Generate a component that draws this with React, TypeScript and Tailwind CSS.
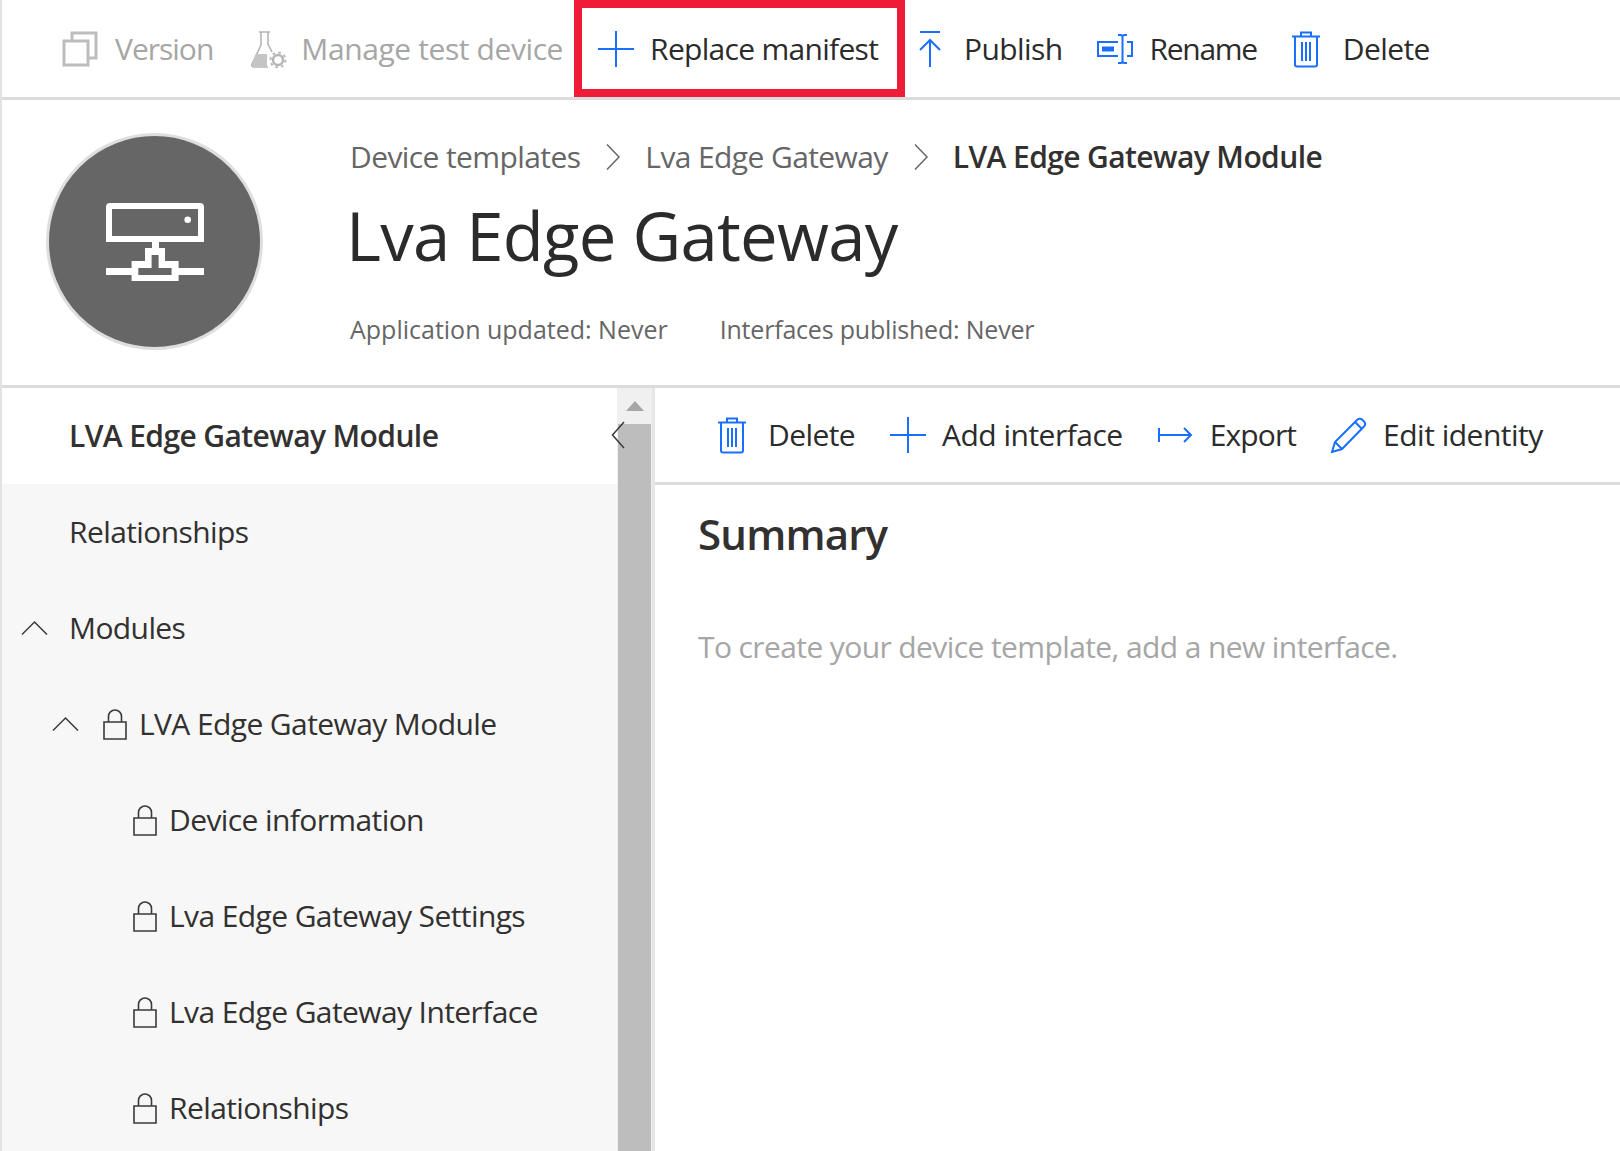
import type { ReactNode } from 'react';

const BLUE = '#1a6fff';

function Trash() {
  return (
    <svg width="30" height="38" viewBox="0 0 30 38" fill="none" stroke={BLUE} strokeWidth="2">
      <path d="M1 6.500h28M10 6V2.500h10V6M4 7v27.500a2 2 0 0 0 2 2h18a2 2 0 0 0 2-2V7" />
      <path d="M11 12v19M15 12v19M19 12v19" />
    </svg>
  );
}

function Plus() {
  return (
    <svg width="36" height="36" viewBox="0 0 36 36" fill="none" stroke={BLUE} strokeWidth="2">
      <path d="M0 18h36M18 0v36" />
    </svg>
  );
}

function Lock() {
  return (
    <svg width="24" height="31" viewBox="0 0 24 31" fill="none" stroke="#3a3a3a" strokeWidth="1.6">
      <path d="M1 13h22v17H1zM5.500 13V7.500a6.500 6.500 0 0 1 13 0V13" />
    </svg>
  );
}

function ChevronUp() {
  return (
    <svg width="27" height="16" viewBox="0 0 27 16" fill="none" stroke="#3a3a3a" strokeWidth="1.5">
      <path d="M1 14.500 13.500 2 26 14.500" />
    </svg>
  );
}

function Crumb() {
  return (
    <svg width="16" height="28" viewBox="0 0 16 28" fill="none" stroke="#666" strokeWidth="1.5">
      <path d="M2 1.500 14 14 2 26.500" />
    </svg>
  );
}

function ToolItem({ icon, label, gap, muted, track }: { icon: ReactNode; label: string; gap: string; muted?: boolean; track?: string }) {
  return (
    <div className={`flex items-center ${gap}`}>
      {icon}
      <span className={`${muted ? 'text-[#a6a6a6]' : 'text-[#2b2b2b]'} ${track ?? ''}`}>{label}</span>
    </div>
  );
}

function NavRow({ label, indent, chevron, lock, chevronGap }: { label: string; indent: string; chevron?: boolean; lock?: boolean; chevronGap?: string }) {
  return (
    <div className={`h-24 flex items-center text-[#323130] ${indent}`}>
      {chevron && <span className={`flex ${chevronGap ?? 'mr-[21px]'}`}><ChevronUp /></span>}
      {lock && <span className="mr-[12px] flex"><Lock /></span>}
      <span>{label}</span>
    </div>
  );
}

export default function App() {
  return (
    <div
      className="w-[1620px] h-[1151px] overflow-hidden bg-white border-l-2 border-[#e3e3e3] text-[30px] leading-none tracking-[-0.6px]"
      style={{ fontFamily: '"Open Sans", "Noto Sans", sans-serif' }}
    >
      {/* top command bar */}
      <div className="h-[100px] border-b-[3px] border-[#dcdcdc] flex items-center pl-[60px]">
        <div className="flex items-center gap-[38px]">
          <ToolItem
            muted
            gap="gap-[17px]"
            label="Version"
            track="tracking-[-1px]"
            icon={
              <svg width="36" height="36" viewBox="0 0 36 36" fill="none" stroke="#bdbdbd" strokeWidth="3">
                <path d="M2 10h24v24H2zM10 9V2h24v25h-7" />
              </svg>
            }
          />
          <ToolItem
            muted
            gap="gap-[14px]"
            label="Manage test device"
            track="tracking-[-0.4px]"
            icon={
              <svg width="36" height="38" viewBox="0 0 36 38" fill="none" stroke="#b5b5b5" strokeWidth="1.6">
                <path d="M8 2h11M10 2v13L1 34a2 2 0 0 0 2 3h14M17 2v12l4 8" />
                <path d="M5 24h11v13H3a2 2 0 0 1-2-3z" fill="#c4c4c4" stroke="none" />
                <circle cx="27" cy="30" r="5" strokeWidth="2.5" />
                <circle cx="27" cy="30" r="7.500" strokeWidth="2" strokeDasharray="2.5 3.4" />
              </svg>
            }
          />
        </div>
        <div className="ml-[11px] mr-[13px] h-[97px] self-start w-[331px] border-[8px] border-[#ee1c36] flex items-center pl-[16px]">
          <ToolItem gap="gap-[16px]" label="Replace manifest" track="tracking-[-0.7px]" icon={<Plus />} />
        </div>
        <div className="flex items-center gap-[34px]">
          <ToolItem
            gap="gap-[22px]"
            label="Publish"
            icon={
              <svg width="24" height="36" viewBox="0 0 24 36" fill="none" stroke={BLUE} strokeWidth="2">
                <path d="M2 1h20M12 36V9M2 19 12 9l10 10" />
              </svg>
            }
          />
          <ToolItem
            gap="gap-[17px]"
            label="Rename"
            track="tracking-[-1.3px]"
            icon={
              <svg width="36" height="30" viewBox="0 0 36 30" fill="none" stroke={BLUE} strokeWidth="2">
                <path d="M21 8H1v14h20M30 8h5v14h-5M21 1h2.500a2 2 0 0 1 2 2v24a2 2 0 0 1-2 2H21M30 1h-2.500a2 2 0 0 0-2 2v24a2 2 0 0 0 2 2H30" />
                <path d="M5 12.500h12v5H5z" fill={BLUE} stroke="none" />
              </svg>
            }
          />
          <ToolItem gap="gap-[22px]" label="Delete" icon={<Trash />} />
        </div>
      </div>

      {/* template header */}
      <div className="h-[288px] border-b-[3px] border-[#dcdcdc] flex">
        <div className="ml-[44px] mt-[33px] size-[217px] rounded-full bg-[#666666] border-[3px] border-[#dedede] flex items-center justify-center">
          <svg width="98" height="78" viewBox="0 0 98 78" fill="none">
            <path d="M4 3h90a1 1 0 0 1 1 1v32H3V4a1 1 0 0 1 1-1z" stroke="#fff" strokeWidth="6" />
            <circle cx="81.700" cy="16.700" r="3.300" fill="#fff" />
            <path
              fill="#fff"
              fillRule="evenodd"
              d="M46 39h7v6h6v13h13.600v7H98v7H72.600v6H25.600v-6H0v-7h25.600v-7H39V45h7zM45.600 52v13H32.300v7h33.300v-7h-13V52z"
            />
          </svg>
        </div>
        <div className="ml-[87px] mt-[42px]">
          <div className="flex items-center text-[#666666]">
            <span>Device templates</span>
            <span className="ml-[25px] mr-[24px] flex"><Crumb /></span>
            <span>Lva Edge Gateway</span>
            <span className="ml-[25px] mr-[24px] flex"><Crumb /></span>
            <span className="font-semibold text-[#323130]">LVA Edge Gateway Module</span>
          </div>
          <div className="mt-[30px] text-[67px] text-[#2b2b2b] tracking-[-0.7px] -ml-[4px]">Lva Edge Gateway</div>
          <div className="mt-[48px] flex gap-[52px] text-[25px] tracking-normal text-[#666666]">
            <span>Application updated: Never</span>
            <span className="tracking-[-0.2px]">Interfaces published: Never</span>
          </div>
        </div>
      </div>

      <div className="flex h-[763px]">
        {/* left nav */}
        <div className="relative w-[615px] flex-none bg-[#f7f7f7]">
          <div className="h-24 bg-white flex items-center pl-[67px] font-semibold text-[#323130]">
            LVA Edge Gateway Module
          </div>
          <NavRow label="Relationships" indent="pl-[67px]" />
          <NavRow label="Modules" indent="pl-[19px]" chevron />
          <NavRow label="LVA Edge Gateway Module" indent="pl-[50px]" chevron chevronGap="mr-[24px]" lock />
          <NavRow label="Device information" indent="pl-[131px]" lock />
          <NavRow label="Lva Edge Gateway Settings" indent="pl-[131px]" lock />
          <NavRow label="Lva Edge Gateway Interface" indent="pl-[131px]" lock />
          <NavRow label="Relationships" indent="pl-[131px]" lock />
          <div className="absolute -right-[8px] top-[33px] z-10">
            <svg width="14" height="28" viewBox="0 0 14 28" fill="none" stroke="#3a3a3a" strokeWidth="1.5">
              <path d="M13 1 1.500 14 13 27" />
            </svg>
          </div>
        </div>
        {/* scrollbar */}
        <div className="w-[35px] flex-none bg-[#f0f0f0] flex flex-col items-center">
          <div className="h-[36px] flex items-center justify-center">
            <svg width="18" height="10" viewBox="0 0 18 10"><path d="M9 0l9 10H0z" fill="#a6a6a6" /></svg>
          </div>
          <div className="w-[33px] flex-1 bg-[#bdbdbd]" />
        </div>
        {/* right panel */}
        <div className="flex-1 border-l-[3px] border-[#e6e6e6]">
          <div className="h-[97px] border-b-[3px] border-[#dcdcdc] flex items-center pl-[62px] gap-[35px]">
            <ToolItem gap="gap-[21px]" label="Delete" icon={<Trash />} />
            <ToolItem gap="gap-[16px]" label="Add interface" track="tracking-[-0.5px]" icon={<Plus />} />
            <ToolItem
              gap="gap-[17px]"
              label="Export"
              track="tracking-[-0.9px]"
              icon={
                <svg width="35" height="18" viewBox="0 0 35 18" fill="none" stroke={BLUE} strokeWidth="2">
                  <path d="M1 2v14M1 9h32M26 2l7 7-7 7" />
                </svg>
              }
            />
            <ToolItem
              gap="gap-[17px]"
              label="Edit identity"
              track="tracking-[-0.5px]"
              icon={
                <svg width="35" height="36" viewBox="0 0 35 36" fill="none" stroke={BLUE} strokeWidth="2">
                  <path d="M1 35l3-10L26 3a3.500 3.500 0 0 1 5-.5l2 2a3.500 3.500 0 0 1 0 5L11 32zM4 25l7 7M24 5l7 7" />
                </svg>
              }
            />
          </div>
          <div className="pl-[43px] pt-[28px]">
            <div className="text-[42px] font-semibold text-[#323130] tracking-[-0.8px]">Summary</div>
            <div className="mt-[77px] text-[#a6a6a6]">To create your device template, add a new interface.</div>
          </div>
        </div>
      </div>
    </div>
  );
}
